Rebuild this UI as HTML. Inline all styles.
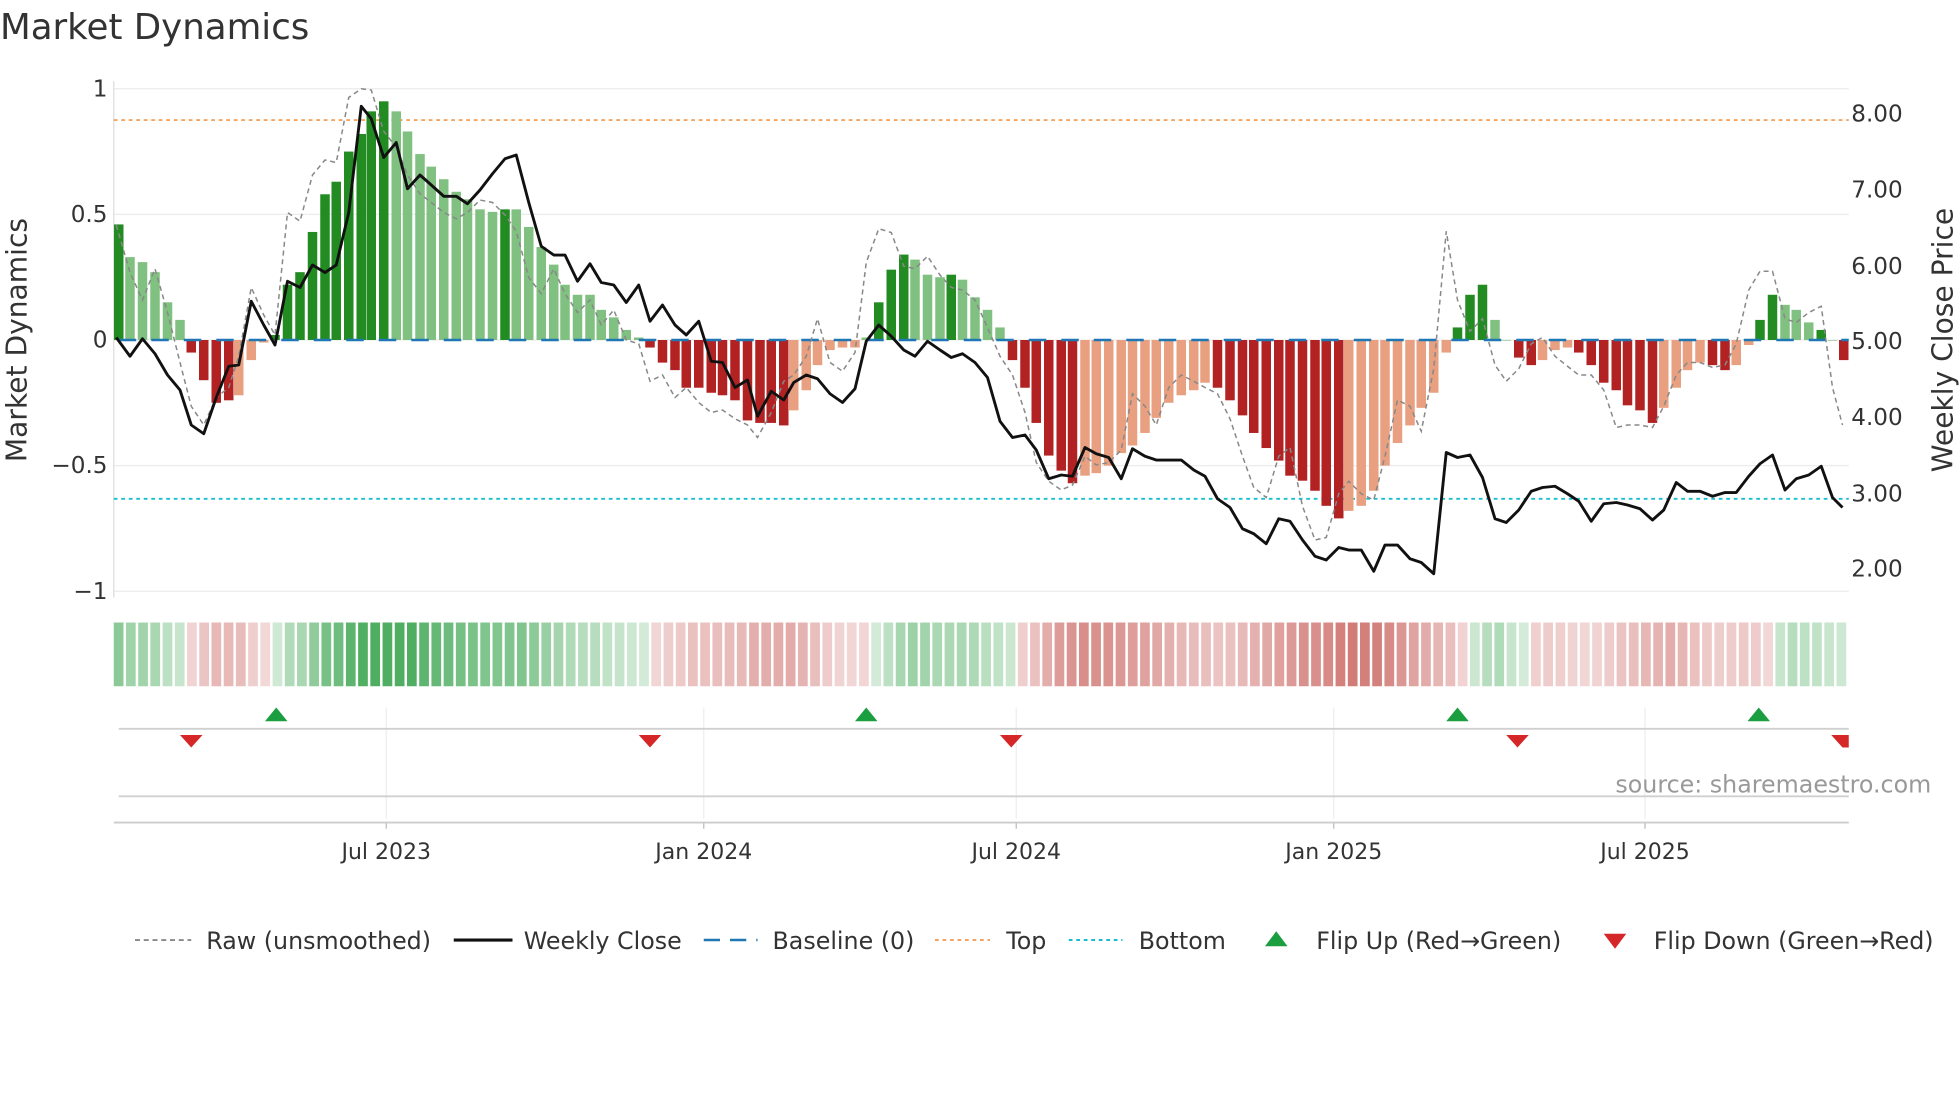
<!DOCTYPE html>
<html><head><meta charset="utf-8"><style>
html,body{margin:0;padding:0;background:#fff;width:1960px;height:1102px;overflow:hidden}
svg{display:block}
text{font-family:"DejaVu Sans","Liberation Sans",sans-serif;fill:#333}
</style></head><body>
<svg id="s" width="1960" height="1102" viewBox="0 0 1568 881.6" xmlns="http://www.w3.org/2000/svg">
<text x="0" y="31" font-size="28.5">Market Dynamics</text>
<g id="grid"></g>
<g id="bars"></g>
<g id="lines"></g>
<g id="heat"></g>
<g id="flips"></g>
<text x="1545" y="634" font-size="19" fill="#999" style="fill:#999" text-anchor="end">source: sharemaestro.com</text>
<g>
<text x="13" y="272" transform="rotate(-90 13 272)" text-anchor="middle" font-size="22.5" dy="8">Market Dynamics</text>
<text x="1555" y="272" transform="rotate(-90 1555 272)" text-anchor="middle" font-size="22.5" dy="7">Weekly Close Price</text>
</g>
<g id="legend" font-size="19">
<line x1="108" y1="752" x2="153" y2="752" stroke="#777" stroke-width="1.3" stroke-dasharray="4,3"/>
<text x="165" y="759">Raw (unsmoothed)</text>
<line x1="363" y1="752" x2="410" y2="752" stroke="#111" stroke-width="2.5"/>
<text x="419" y="759">Weekly Close</text>
<line x1="563" y1="752" x2="606" y2="752" stroke="#1f77b4" stroke-width="2" stroke-dasharray="13,8"/>
<text x="618" y="759">Baseline (0)</text>
<line x1="748" y1="752" x2="792" y2="752" stroke="#f4a460" stroke-width="1.6" stroke-dasharray="3,3"/>
<text x="805" y="759">Top</text>
<line x1="855" y1="752" x2="898" y2="752" stroke="#17becf" stroke-width="1.6" stroke-dasharray="3,3"/>
<text x="911" y="759">Bottom</text>
<polygon points="1012,757 1030,757 1021,745" fill="#1a9e3f"/>
<text x="1053" y="759">Flip Up (Red→Green)</text>
<polygon points="1283,747 1301,747 1292,759" fill="#d62728"/>
<text x="1323" y="759">Flip Down (Green→Red)</text>
</g>
</svg>
<script>
const NS="http://www.w3.org/2000/svg";
function el(p,t,a,txt){const e=document.createElementNS(NS,t);for(const k in a)e.setAttribute(k,a[k]);if(txt!==undefined)e.textContent=txt;document.getElementById(p).appendChild(e);return e;}
const Y=v=>272-201*v;
[1,0.5,0,-0.5,-1].forEach(v=>{el('grid','line',{x1:91,x2:1479,y1:Y(v),y2:Y(v),stroke:'#ececec','stroke-width':1});
 el('grid','text',{x:86,y:Y(v)+6,'text-anchor':'end','font-size':18.5},v==1?'1':v==0.5?'0.5':v==0?'0':v==-0.5?'−0.5':'−1');});
el('grid','line',{x1:91,x2:91,y1:65,y2:478,stroke:'#ddd','stroke-width':1});
[['8.00',91],['7.00',152],['6.00',213],['5.00',273],['4.00',334],['3.00',395],['2.00',455]].forEach(a=>el('grid','text',{x:1481,y:a[1]+6,'font-size':18.5},a[0]));
[[309,'Jul 2023'],[563,'Jan 2024'],[813,'Jul 2024'],[1067,'Jan 2025'],[1316,'Jul 2025']].forEach(a=>{
 el('grid','line',{x1:a[0],x2:a[0],y1:566,y2:655,stroke:'#eee','stroke-width':1});
 el('grid','line',{x1:a[0],x2:a[0],y1:658,y2:663,stroke:'#bbb','stroke-width':1});
 el('grid','text',{x:a[0],y:687,'text-anchor':'middle','font-size':17.6},a[1]);});
el('grid','line',{x1:95,x2:1479,y1:583,y2:583,stroke:'#d0d0d0','stroke-width':1.5});
el('grid','line',{x1:95,x2:1479,y1:637,y2:637,stroke:'#d0d0d0','stroke-width':1.5});
el('grid','line',{x1:91,x2:1479,y1:658,y2:658,stroke:'#ccc','stroke-width':1.5});
el('grid','line',{x1:91,x2:1479,y1:96,y2:96,stroke:'#f4a460','stroke-width':1.5,'stroke-dasharray':'3,3'});
el('grid','line',{x1:91,x2:1479,y1:399,y2:399,stroke:'#17becf','stroke-width':1.5,'stroke-dasharray':'3,3'});
const B=[[95,.46,1],[104,.33,0],[114,.31,0],[124,.27,0],[134,.15,0],[144,.08,0],[153,-.05,1],[163,-.16,1],[173,-.25,1],[183,-.24,1],[191,-.22,0],[201,-.08,0],[211,-.01,0],[220,.02,1],[230,.22,1],[240,.27,1],[250,.43,1],[260,.58,1],[269,.63,1],[279,.75,1],[289,.82,1],[297,.91,1],[307,.95,1],[317,.91,0],[326,.83,0],[336,.74,0],[345,.69,0],[355,.64,0],[365,.59,0],[374,.56,0],[384,.52,0],[394,.51,0],[404,.52,1],[413,.52,0],[423,.45,0],[433,.37,0],[443,.30,0],[452,.22,0],[462,.18,0],[472,.18,0],[481,.12,0],[491,.09,0],[501,.04,0],[511,.01,0],[520,-.03,1],[530,-.09,1],[540,-.12,1],[549,-.19,1],[559,-.19,1],[569,-.21,1],[578,-.22,1],[588,-.24,1],[598,-.32,1],[608,-.33,1],[617,-.33,1],[627,-.34,1],[635,-.28,0],[645,-.2,0],[654,-.1,0],[664,-.04,0],[674,-.03,0],[684,-.03,0],[693,.01,0],[703,.15,1],[713,.28,1],[723,.34,1],[732,.32,0],[742,.26,0],[752,.25,0],[761,.26,1],[770,.24,0],[780,.17,0],[790,.12,0],[800,.05,0],[810,-.08,1],[820,-.19,1],[829,-.33,1],[839,-.46,1],[849,-.52,1],[858,-.57,1],[868,-.54,0],[877,-.53,0],[887,-.5,0],[897,-.45,0],[906,-.42,0],[916,-.37,0],[925,-.31,0],[935,-.25,0],[945,-.22,0],[955,-.2,0],[964,-.17,0],[974,-.19,1],[984,-.24,1],[994,-.3,1],[1003,-.37,1],[1013,-.43,1],[1023,-.48,1],[1032,-.54,1],[1042,-.56,1],[1052,-.6,1],[1061,-.66,1],[1071,-.71,1],[1079,-.68,0],[1089,-.66,0],[1099,-.6,0],[1108,-.5,0],[1118,-.41,0],[1128,-.34,0],[1137,-.27,0],[1147,-.21,0],[1157,-.05,0],[1166,.05,1],[1176,.18,1],[1186,.22,1],[1196,.08,0],[1205,0,0],[1215,-.07,1],[1225,-.1,1],[1234,-.08,0],[1244,-.04,0],[1254,-.03,0],[1263,-.05,1],[1273,-.1,1],[1283,-.17,1],[1293,-.2,1],[1302,-.26,1],[1312,-.28,1],[1322,-.33,1],[1331,-.27,0],[1341,-.19,0],[1350,-.12,0],[1360,-.09,0],[1370,-.1,1],[1380,-.12,1],[1389,-.1,0],[1399,-.02,0],[1408,.08,1],[1418,.18,1],[1428,.14,0],[1437,.12,0],[1447,.07,0],[1457,.04,1],[1466,0,0],[1475,-.08,1]];
B.forEach(b=>{const [x,v,d]=b;const c=v>=0?(d?'#228b22':'#80c080'):(d?'#b22222':'#e9a080');
 const y0=Y(Math.max(v,0)),h=Math.abs(v)*201;
 el('bars','rect',{x:x-3.8,y:y0,width:7.6,height:Math.max(h,0.5),fill:c});});
el('bars','line',{x1:95,x2:1479,y1:272,y2:272,stroke:'#1f77b4','stroke-width':2,'stroke-dasharray':'14,12'});
const cw=1388/142;
for(let i=0;i<142;i++){const b=B[Math.min(i,B.length-1)];const v=b[1];const a=Math.min(1,0.25+Math.abs(v)*0.9);
 const col=v>=0?`rgba(60,165,80,${a*0.9})`:`rgba(195,80,75,${a*0.85})`;
 el('heat','rect',{x:91+i*cw,y:498,width:cw-2,height:51,fill:col});}
const P=[[93,270],[104,285],[114,271],[124,283],[134,300],[144,312],[153,340],[163,347],[173,318],[183,293],[191,292],[201,241],[211,260],[220,276],[230,225],[240,230],[250,212],[260,218],[269,212],[279,170],[289,85],[297,95],[307,126],[317,114],[326,151],[336,140],[345,148],[355,157],[365,157],[374,163],[384,152],[394,139],[404,127],[413,124],[423,162],[433,197],[443,204],[452,204],[462,225],[472,211],[481,226],[491,228],[501,242],[511,228],[520,257],[530,244],[540,260],[549,268],[559,257],[569,289],[578,290],[588,310],[598,304],[606,333],[617,313],[627,320],[635,306],[645,300],[654,303],[664,315],[674,322],[684,311],[693,273],[703,260],[713,269],[723,280],[732,285],[742,273],[752,280],[761,286],[770,283],[780,290],[790,302],[800,337],[810,350],[820,348],[829,360],[839,383],[849,380],[858,381],[868,358],[877,363],[887,366],[897,383],[906,359],[916,365],[925,368],[935,368],[945,368],[955,376],[964,381],[974,399],[984,406],[994,423],[1003,427],[1013,435],[1023,415],[1032,417],[1042,432],[1052,445],[1061,448],[1071,438],[1079,440],[1089,440],[1099,457],[1108,436],[1118,436],[1128,447],[1137,450],[1147,459],[1157,362],[1166,366],[1176,364],[1186,382],[1196,415],[1205,418],[1215,408],[1225,393],[1234,390],[1244,389],[1254,395],[1263,401],[1273,417],[1283,403],[1293,402],[1302,404],[1312,407],[1322,416],[1331,408],[1341,386],[1350,393],[1360,393],[1370,397],[1380,394],[1389,394],[1399,381],[1408,371],[1418,364],[1428,392],[1437,383],[1447,380],[1457,373],[1466,398],[1474,406]];
const R=[[93,180],[104,218],[114,240],[124,215],[134,250],[144,290],[153,325],[163,340],[173,318],[183,310],[191,285],[201,230],[211,252],[220,268],[230,170],[240,177],[250,140],[260,128],[269,130],[279,78],[289,71],[297,72],[307,105],[317,118],[326,140],[336,155],[345,162],[355,170],[365,175],[374,170],[384,160],[394,162],[404,172],[413,185],[423,222],[433,235],[443,215],[452,235],[462,250],[472,240],[481,260],[491,248],[501,272],[511,275],[520,305],[530,300],[540,318],[549,310],[559,322],[569,330],[578,328],[588,335],[598,340],[606,350],[617,330],[627,305],[635,300],[645,285],[654,255],[664,290],[674,297],[684,282],[693,210],[703,183],[713,186],[723,213],[732,215],[742,205],[752,220],[761,230],[770,232],[780,240],[790,262],[800,285],[810,300],[820,330],[829,370],[839,385],[849,392],[858,388],[868,365],[877,372],[887,370],[897,360],[906,315],[916,325],[925,340],[935,310],[945,300],[955,305],[964,310],[974,315],[984,335],[994,365],[1003,390],[1013,398],[1023,365],[1032,358],[1042,405],[1052,432],[1061,430],[1071,395],[1079,385],[1089,395],[1099,400],[1108,365],[1118,320],[1128,325],[1137,345],[1147,295],[1157,185],[1166,240],[1176,265],[1186,255],[1196,292],[1205,305],[1215,295],[1225,275],[1234,270],[1244,285],[1254,293],[1263,300],[1273,300],[1283,312],[1293,342],[1302,340],[1312,340],[1322,342],[1331,325],[1341,300],[1350,290],[1360,290],[1370,294],[1380,292],[1389,275],[1399,232],[1408,217],[1418,217],[1428,255],[1437,258],[1447,250],[1457,245],[1466,310],[1474,340]];
el('lines','polyline',{points:R.map(p=>p.join(',')).join(' '),fill:'none',stroke:'#888','stroke-width':1.2,'stroke-dasharray':'4,3'});
el('lines','polyline',{points:P.map(p=>p.join(',')).join(' '),fill:'none',stroke:'#111','stroke-width':2.3,'stroke-linejoin':'round'});
[221,693,1166,1407].forEach(x=>el('flips','polygon',{points:`${x-9},577 ${x+9},577 ${x},566`,fill:'#1a9e3f'}));
[153,520,809,1214].forEach(x=>el('flips','polygon',{points:`${x-9},588 ${x+9},588 ${x},598`,fill:'#d62728'}));
el('flips','polygon',{points:`1465,588 1479,588 1479,598 1474,598`,fill:'#d62728'});
</script>
</body></html>
